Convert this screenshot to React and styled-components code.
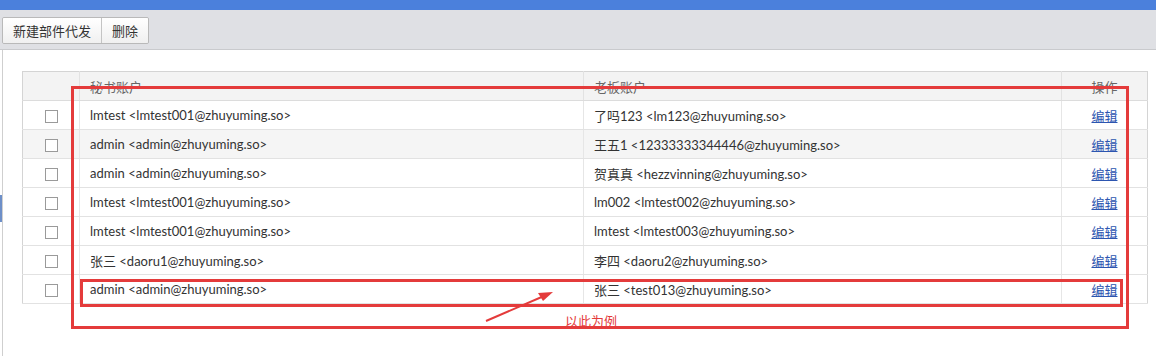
import React from 'react';
import styled, { createGlobalStyle } from 'styled-components';

const GlobalStyle = createGlobalStyle`
  body {
    margin: 0;
    background: #fff;
    font-family: Lato, "Noto Sans CJK SC", sans-serif;
    font-size: 13px;
    color: #333;
  }
`;

const Page = styled.div`
  position: relative;
  width: 1156px;
  height: 356px;
  overflow: hidden;
  display: flex;
  flex-direction: column;
`;

const TopBar = styled.div`
  height: 10px;
  background: #4b80dc;
`;

const Toolbar = styled.div`
  height: 40px;
  box-sizing: border-box;
  background: #dfe0e4;
  border-bottom: 1px solid #c9cacd;
  display: flex;
  align-items: flex-start;
  padding: 7px 0 0 2px;
`;

const ButtonGroup = styled.div`
  display: flex;
  border: 1px solid #b9b9b9;
  border-radius: 2px;
  overflow: hidden;
`;

const ToolButton = styled.button`
  height: 25px;
  padding: 0 10px;
  border: none;
  border-left: ${(p) => (p.first ? 'none' : '1px solid #c4c4c4')};
  background: linear-gradient(#ffffff, #f0f0f0);
  font-family: "Noto Sans CJK SC", sans-serif;
  font-size: 13px;
  color: #333;
  cursor: pointer;
`;

const Panel = styled.div`
  flex: 1;
  margin-left: 2px;
  border-left: 1px solid #cfcfcf;
  padding: 21px 0 0 19px;
`;

const Table = styled.table`
  width: 1125px;
  border-collapse: collapse;
  border: 1px solid #d4d4d4;
  table-layout: fixed;
`;

const HeadCell = styled.th`
  height: 28px;
  padding: 0 10px;
  background: #f3f3f3;
  border-left: 1px solid #e2e2e2;
  border-bottom: 1px solid #dcdcdc;
  font-weight: normal;
  color: #666;
  text-align: ${(p) => p.align || 'left'};
  &:first-child { border-left: none; }
`;

const Row = styled.tr`
  background: ${(p) => (p.shaded ? '#f5f5f5' : '#fff')};
`;

const Cell = styled.td`
  height: 28px;
  padding: 0 10px;
  border-left: 1px solid #e6e6e6;
  border-bottom: 1px solid #e2e2e2;
  white-space: nowrap;
  text-align: ${(p) => p.align || 'left'};
  &:first-child { border-left: none; }
`;

const Check = styled.span`
  display: inline-block;
  width: 11px;
  height: 11px;
  border: 1px solid #9a9a9a;
  background: #fff;
  vertical-align: middle;
  margin-left: 1px;
`;

const EditLink = styled.a`
  color: #2c55b0;
  text-decoration: underline;
  cursor: pointer;
`;

const LeftTab = styled.div`
  position: absolute;
  left: 0;
  top: 195px;
  width: 2px;
  height: 27px;
  background: #6d8fc8;
`;

const RedBox = styled.div`
  position: absolute;
  box-sizing: border-box;
  border: 3px solid #e43b3b;
  pointer-events: none;
`;

const Note = styled.span`
  position: absolute;
  left: 565px;
  top: 311px;
  font-size: 13px;
  color: #e43b3b;
  font-family: "Noto Sans CJK SC", sans-serif;
`;

const Arrow = styled.svg`
  position: absolute;
  left: 480px;
  top: 285px;
  overflow: visible;
`;

const rows = [
  ['lmtest <lmtest001@zhuyuming.so>', '了吗123 <lm123@zhuyuming.so>'],
  ['admin <admin@zhuyuming.so>', '王五1 <12333333344446@zhuyuming.so>'],
  ['admin <admin@zhuyuming.so>', '贺真真 <hezzvinning@zhuyuming.so>'],
  ['lmtest <lmtest001@zhuyuming.so>', 'lm002 <lmtest002@zhuyuming.so>'],
  ['lmtest <lmtest001@zhuyuming.so>', 'lmtest <lmtest003@zhuyuming.so>'],
  ['张三 <daoru1@zhuyuming.so>', '李四 <daoru2@zhuyuming.so>'],
  ['admin <admin@zhuyuming.so>', '张三 <test013@zhuyuming.so>'],
];

export default function App() {
  return (
    <Page>
      <GlobalStyle />
      <TopBar />
      <Toolbar>
        <ButtonGroup>
          <ToolButton first>新建部件代发</ToolButton>
          <ToolButton>删除</ToolButton>
        </ButtonGroup>
      </Toolbar>
      <Panel>
        <Table>
          <colgroup>
            <col style={{ width: 57 }} />
            <col style={{ width: 504 }} />
            <col style={{ width: 478 }} />
            <col style={{ width: 86 }} />
          </colgroup>
          <thead>
            <tr>
              <HeadCell />
              <HeadCell>秘书账户</HeadCell>
              <HeadCell>老板账户</HeadCell>
              <HeadCell align="center">操作</HeadCell>
            </tr>
          </thead>
          <tbody>
            {rows.map((r, i) => (
              <Row key={i} shaded={i === 1}>
                <Cell align="center"><Check /></Cell>
                <Cell>{r[0]}</Cell>
                <Cell>{r[1]}</Cell>
                <Cell align="center"><EditLink>编辑</EditLink></Cell>
              </Row>
            ))}
          </tbody>
        </Table>
      </Panel>
      <LeftTab />
      <RedBox style={{ left: 71, top: 86, width: 1058, height: 243 }} />
      <RedBox style={{ left: 80, top: 279, width: 1043, height: 28 }} />
      <Arrow width="80" height="40">
        <line x1="6" y1="36" x2="64" y2="11" stroke="#e43b3b" strokeWidth="2" />
        <polygon points="73,7 58,8 63,16" fill="#e43b3b" />
      </Arrow>
      <Note>以此为例</Note>
    </Page>
  );
}
